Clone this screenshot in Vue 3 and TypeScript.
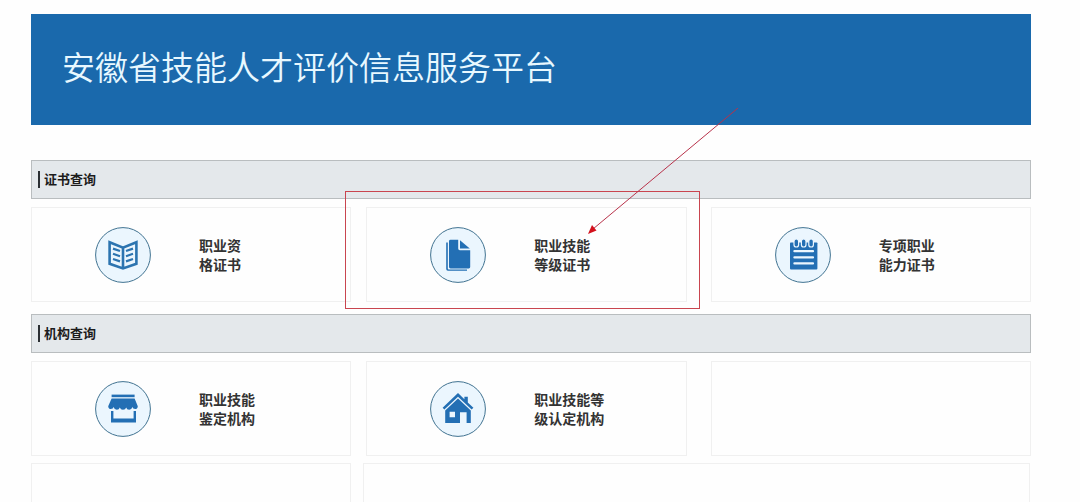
<script setup lang="ts">
type IconName = 'book' | 'pages' | 'notepad' | 'shop' | 'house'

interface Entry {
  icon: IconName
  lines: string[]
  marked?: boolean
}

interface Section {
  title: string
  entries: (Entry | null)[]
}

const sections: Section[] = [
  {
    title: '证书查询',
    entries: [
      { icon: 'book', lines: ['职业资', '格证书'] },
      { icon: 'pages', lines: ['职业技能', '等级证书'], marked: true },
      { icon: 'notepad', lines: ['专项职业', '能力证书'] },
    ],
  },
  {
    title: '机构查询',
    entries: [
      { icon: 'shop', lines: ['职业技能', '鉴定机构'] },
      { icon: 'house', lines: ['职业技能等', '级认定机构'] },
      null,
    ],
  },
]
</script>

<template>
  <div class="page">
    <header class="banner">
      <h1>安徽省技能人才评价信息服务平台</h1>
    </header>

    <main class="content">
      <section v-for="section in sections" :key="section.title" class="section">
        <h2 class="bar"><span>{{ section.title }}</span></h2>
        <div class="cards">
          <div v-for="(entry, i) in section.entries" :key="i" class="card">
            <a v-if="entry" href="#" class="link">
              <svg class="icon" viewBox="0 0 56 56" aria-hidden="true">
                <circle class="disc" cx="28" cy="28" r="27.4" />
                <g v-if="entry.icon === 'book'" class="stroke">
                  <path d="M14.6 15.2 28 20.6 41.4 15.2V36.8L28 41.4 14.6 36.8ZM28 20.6V41" />
                  <path
                    class="thin"
                    d="M18 21.6l7 2.4M18 26.8l7 2.4M18 32l7 2.4M38 21.6l-7 2.4M38 26.8l-7 2.4M38 32l-7 2.4"
                  />
                </g>
                <g v-else-if="entry.icon === 'pages'" class="fill">
                  <path d="M20.5 12.8H28.2V21.6Q28.2 23.2 29.8 23.2H40.2V40Q40.2 41.4 38.8 41.4H20.5Q19 41.4 19 40V14.2Q19 12.8 20.5 12.8Z" />
                  <path d="M30 13.2 39.8 21.4H30Z" />
                  <path d="M16.2 15.4H17.8V41.4Q17.8 42.4 18.8 42.4H37V43.8H18Q16.2 43.8 16.2 42Z" />
                </g>
                <g v-else-if="entry.icon === 'notepad'">
                  <path class="fill" d="M15.8 15.4H41.6Q42.4 15.4 42.4 16.2V41.4Q42.4 42.4 41.4 42.4H16Q15 42.4 15 41.4V16.2Q15 15.4 15.8 15.4Z" />
                  <g class="ring">
                    <rect x="19" y="12" width="4.6" height="8" rx="2.3" />
                    <rect x="26.4" y="12" width="4.6" height="8" rx="2.3" />
                    <rect x="33.8" y="12" width="4.6" height="8" rx="2.3" />
                  </g>
                  <path class="gap" d="M19.4 24.2H38M19.4 30.4H38M19.4 36.4H38" />
                </g>
                <g v-else-if="entry.icon === 'shop'" class="fill">
                  <path d="M16.6 13.6H39.6V16.2H16.6Z" />
                  <path d="M16.6 17.4H39.6L42.8 25.2Q42.6 28 40.2 28 37.8 28 37.4 26 36.6 28.8 34.2 28.8 31.8 28.8 31.2 26.4 30.4 28.8 28 28.8 25.6 28.8 24.8 26.4 24.2 28.8 21.8 28.8 19.4 28.8 18.6 26 18.2 28 15.8 28 13.4 28 13.2 25.2Z" />
                  <path d="M16 30H18.4V37.4H38.6V30H41V41.4H16Z" />
                </g>
                <g v-else class="fill">
                  <path d="M28 12 34.4 18.2V15.8H37.8V21.4L43.4 26.8 41.6 28.6 28 15.8 14.4 28.6 12.6 26.8Z" />
                  <path fill-rule="evenodd" d="M28 17.4 40.8 29.4V42H36.6V31.2H30V42H15.2V29.4ZM19.6 30.8V36.2H25V30.8Z" />
                </g>
              </svg>
              <span class="label">
                <span v-for="line in entry.lines" :key="line">{{ line }}</span>
              </span>
            </a>
            <div v-if="entry && entry.marked" class="mark" aria-hidden="true">
              <svg class="arrow" viewBox="0 0 150 126">
                <line x1="150" y1="0" x2="5" y2="121" />
                <path d="M0 126 4 117 8.5 122.5Z" />
              </svg>
            </div>
          </div>
        </div>
      </section>

      <div class="tail">
        <div class="blank"></div>
        <div class="blank"></div>
      </div>
    </main>
  </div>
</template>

<style>
body {
  margin: 0;
  background: #fefefe;
}
</style>

<style scoped>
.page {
  box-sizing: border-box;
  display: flex;
  flex-direction: column;
  min-height: 100vh;
  padding: 14px 49px 0 31px;
  font-family: "Liberation Sans", "Noto Sans CJK SC", sans-serif;
  color: #333;
}

.banner {
  display: flex;
  align-items: center;
  box-sizing: border-box;
  min-height: 111px;
  padding: 0 31px 2px;
  background: #1a69ac;
}

h1 {
  margin: 0;
  font-size: 33px;
  font-weight: 350;
  line-height: 48px;
  color: #e8f8ff;
}

.content {
  display: flex;
  flex: 1;
  flex-direction: column;
  padding-top: 35px;
}

.section {
  margin-bottom: 12px;
}

.section:nth-of-type(2) {
  margin-bottom: 7px;
}

.bar {
  display: flex;
  align-items: center;
  box-sizing: border-box;
  min-height: 39px;
  margin: 0 0 8px;
  padding: 0 6px;
  border: 1px solid #b9bdbf;
  background: #e4e8eb;
  font-size: 13px;
  line-height: 17px;
  color: #1c1c1c;
}

.bar span {
  padding-left: 4px;
  border-left: 2px solid #2b2f33;
}

.cards {
  display: grid;
  grid-template-columns: 1fr 15px 1fr 24px 1fr;
}

.card {
  position: relative;
  box-sizing: border-box;
  min-height: 95px;
  border: 1px solid #f0f0f0;
}

.card:nth-child(2) {
  grid-column: 3;
}

.card:nth-child(3) {
  grid-column: 5;
}

.link {
  display: flex;
  align-items: center;
  gap: 48px;
  min-height: 93px;
  padding-left: 63px;
  color: inherit;
  text-decoration: none;
}

.icon {
  flex: none;
  width: 56px;
  height: 56px;
}

.disc {
  fill: #ebf6fe;
  stroke: #417391;
  stroke-width: 1;
}

.fill {
  fill: #236fb4;
}

.stroke {
  fill: none;
  stroke: #2c74b0;
  stroke-width: 2.6;
}

.thin {
  stroke-width: 2.2;
}

.ring {
  fill: #236fb4;
  stroke: #ebf6fe;
  stroke-width: 1.2;
}

.gap {
  stroke: #ebf6fe;
  stroke-width: 2.2;
  stroke-linecap: round;
}

.label {
  display: flex;
  flex-direction: column;
  padding-top: 2px;
  font-size: 14px;
  font-weight: 700;
  line-height: 19px;
}

.mark {
  position: absolute;
  inset: -17px -14px -8px -22px;
  border: 1px solid #c9454f;
  pointer-events: none;
}

.arrow {
  position: absolute;
  top: -84px;
  left: 242px;
  width: 150px;
  height: 126px;
}

.arrow line {
  stroke: #b8324a;
  stroke-width: 1;
}

.arrow path {
  fill: #d3101c;
}

.tail {
  display: grid;
  flex: 1;
  grid-template-columns: calc((100% - 38px) / 3) 1fr;
  gap: 12px;
  min-height: 39px;
  padding-right: 1px;
}

.blank {
  border: 1px solid #f0f0f0;
  border-bottom: 0;
}
</style>
